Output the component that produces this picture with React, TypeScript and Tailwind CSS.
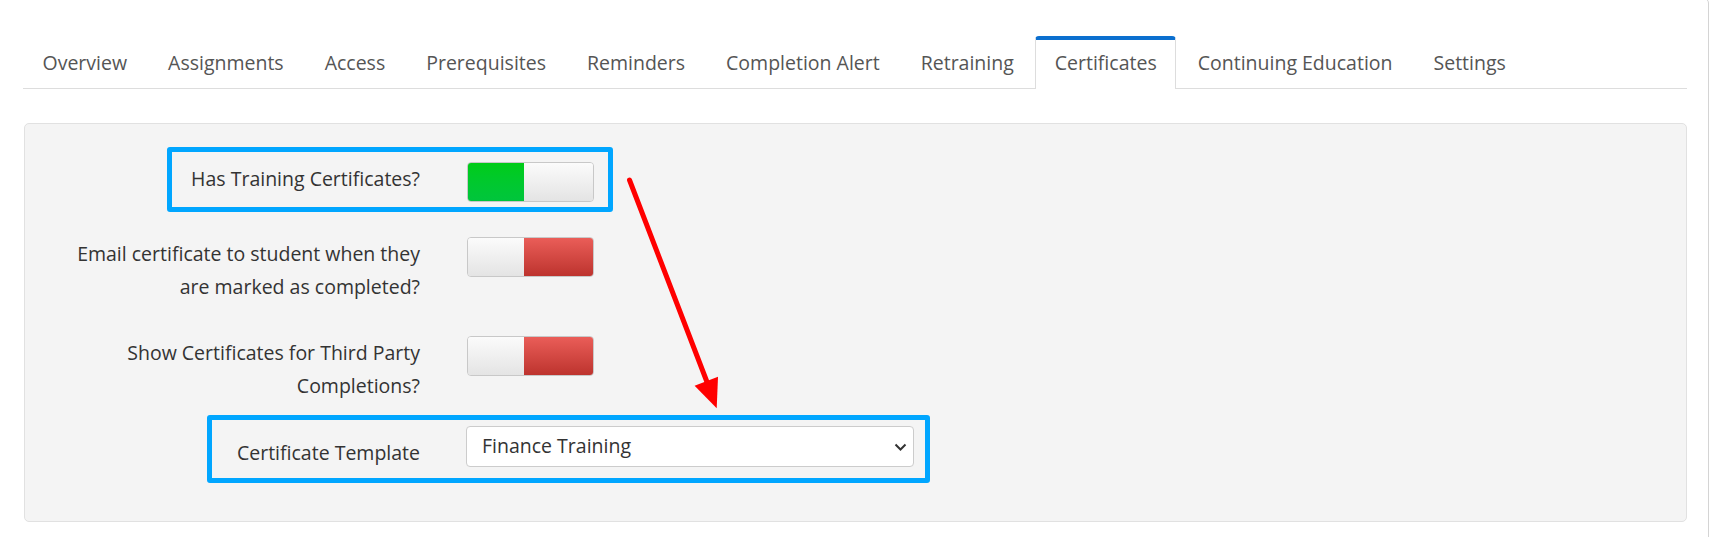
import React from 'react';

const TABS = [
  'Overview',
  'Assignments',
  'Access',
  'Prerequisites',
  'Reminders',
  'Completion Alert',
  'Retraining',
  'Certificates',
  'Continuing Education',
  'Settings',
];

function Toggle({ on }: { on: boolean }) {
  // left part is always 56px, right part 71px
  return (
    <div className="flex w-[127px] h-[40px] rounded-[4px] border border-[#c8c8c8] overflow-hidden shrink-0">
      {on ? (
        <>
          <div className="w-[56px] h-full bg-gradient-to-b from-[#00cc16] to-[#00c53c]" />
          <div className="flex-1 h-full bg-gradient-to-b from-[#fbfbfb] to-[#e4e4e4]" />
        </>
      ) : (
        <>
          <div className="w-[56px] h-full bg-gradient-to-b from-[#fbfbfb] to-[#e4e4e4]" />
          <div className="flex-1 h-full bg-gradient-to-b from-[#ea5d58] to-[#bd332e]" />
        </>
      )}
    </div>
  );
}

export default function App() {
  return (
    <div
      className="relative w-[1710px] h-[537px] overflow-hidden bg-white"
      style={{ fontFamily: '"Open Sans", "Noto Sans", sans-serif' }}
    >
      <div className="-ml-[2px] -mt-[2px] w-[1711px] h-[600px] border border-[#d4d4d4] rounded-[5px]">
        {/* tabs */}
        <div className="ml-[24px] mt-[37px] w-[1664px] flex border-b border-[#dddddd]">
          {TABS.map((t) => {
            const active = t === 'Certificates';
            return (
              <div
                key={t}
                className={`mr-[2px] px-[18.5px] pt-[9px] pb-[13px] border-x border-t-[4px] rounded-t-[4px] text-[19.5px] leading-[27px] text-[#555] -mb-px ${
                  active
                    ? 'bg-white border-x-[#dddddd] border-t-[#0b6fcf]'
                    : 'border-transparent'
                }`}
              >
                {t}
              </div>
            );
          })}
        </div>

        {/* settings panel */}
        <div className="ml-[25px] mt-[34px] w-[1663px] h-[399px] bg-[#f4f4f4] border border-[#e1e1e1] rounded-[5px] pt-[38px] pl-[40px] text-[19.5px] text-[#333]">
          <div className="flex items-start gap-[47px]">
            <div className="w-[355px] text-right leading-[33px]">Has Training Certificates?</div>
            <Toggle on />
          </div>

          <div className="flex items-start gap-[47px] mt-[35px]">
            <div className="w-[355px] text-right leading-[33px]">
              Email certificate to student when they are marked as completed?
            </div>
            <Toggle on={false} />
          </div>

          <div className="flex items-start gap-[47px] mt-[33px]">
            <div className="w-[355px] text-right leading-[33px]">
              Show Certificates for Third Party Completions?
            </div>
            <Toggle on={false} />
          </div>

          <div className="flex items-start gap-[46px] mt-[24px]">
            <div className="w-[355px] text-right leading-[33px] pt-[10px]">Certificate Template</div>
            <div className="flex items-center justify-between w-[448px] h-[41px] bg-white border border-[#cccccc] rounded-[4px] pl-[15px] pr-[6px]">
              <span className="leading-[27px] -mt-[2px]">Finance Training</span>
              <svg width="13" height="9" viewBox="0 0 13 9" className="mt-[1px]">
                <path d="M1.5 1.5 L6.5 6.5 L11.5 1.5" fill="none" stroke="#333" strokeWidth="2" />
              </svg>
            </div>
          </div>
        </div>
      </div>

      {/* annotation boxes */}
      <div className="absolute left-[167px] top-[147px] w-[446px] h-[65px] border-[5px] border-[#00a6ff] rounded-[3px] pointer-events-none" />
      <div className="absolute left-[207px] top-[415px] w-[723px] h-[68px] border-[5px] border-[#00a6ff] rounded-[3px] pointer-events-none" />

      {/* annotation arrow */}
      <svg className="absolute left-0 top-0 pointer-events-none" width="1710" height="537">
        <line x1="629.5" y1="180" x2="707" y2="382" stroke="#ff0000" strokeWidth="5" strokeLinecap="round" />
        <polygon points="716.7,408.3 718,376.7 694.6,385.7" fill="#ff0000" />
      </svg>
    </div>
  );
}
